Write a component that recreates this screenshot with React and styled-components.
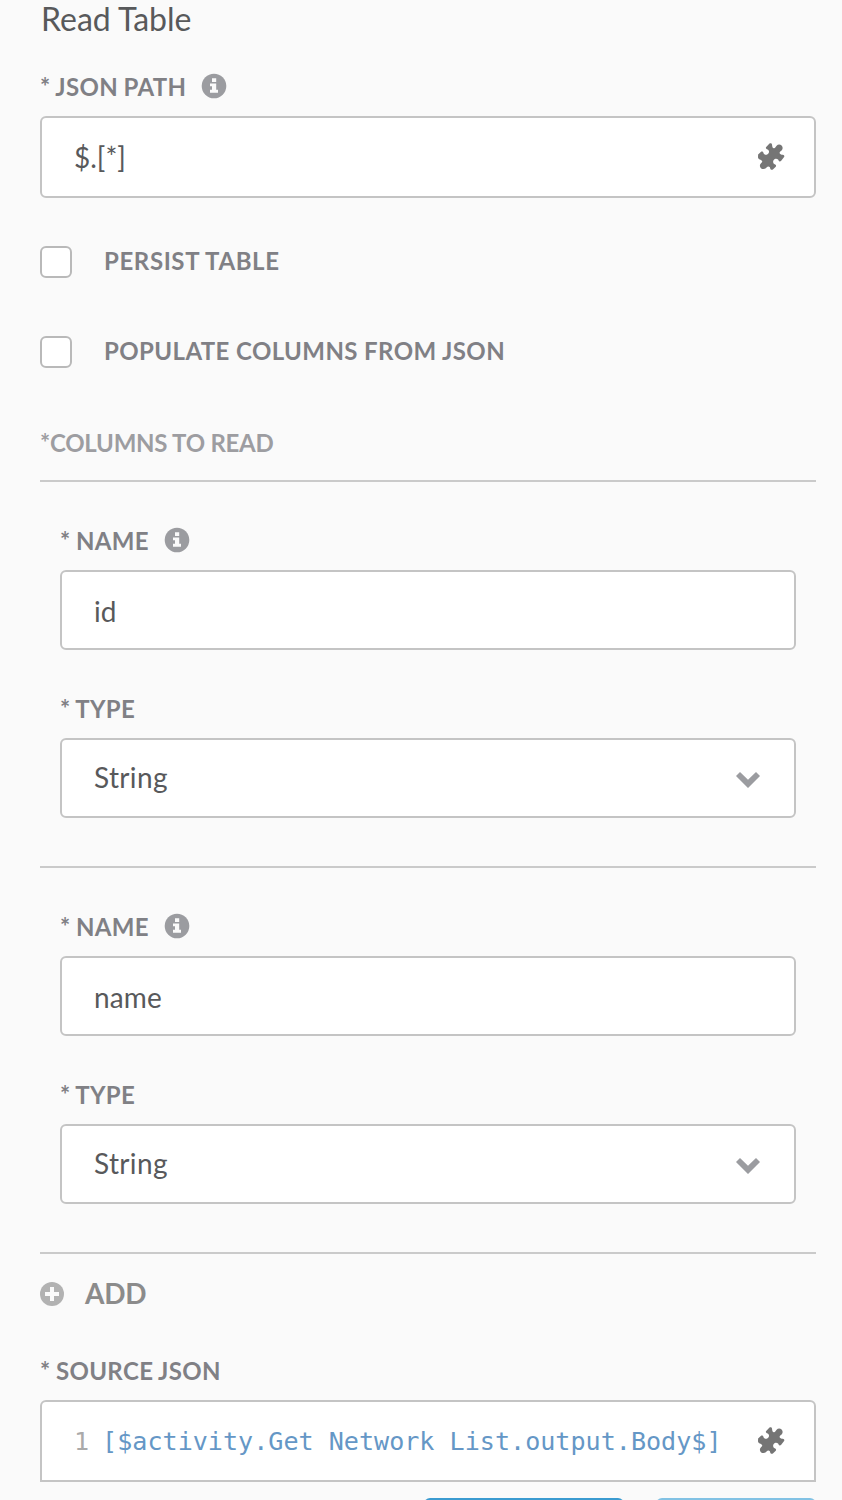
import React from 'react';
import styled, { createGlobalStyle } from 'styled-components';

const GlobalStyle = createGlobalStyle`
  * { box-sizing: border-box; }
  html, body { margin: 0; background: #fafafa; }
  body { font-family: Lato, sans-serif; color: #58595b; overflow: hidden; }
`;

const Panel = styled.main`
  height: 1500px;
  padding: 0 26px 0 40px;
  overflow: hidden;
  background: #fafafa;
`;

const Title = styled.h1`
  margin: 0;
  height: 58px;
  padding-left: 1px;
  font-size: 32px;
  line-height: 37px;
  font-weight: 400;
  white-space: nowrap;
`;

const Label = styled.label`
  display: flex;
  align-items: center;
  gap: 16px;
  height: 58px;
  font-size: 24px;
  font-weight: 700;
  line-height: 58px;
  letter-spacing: 0.35px;
  word-spacing: -0.8px;
  color: #808085;
  white-space: nowrap;

  svg { margin: -3px 0 0 -1px; }
`;

const Field = styled.div`
  display: flex;
  align-items: center;
  justify-content: space-between;
  height: ${(p) => p.$height || 80}px;
  padding: 0 ${(p) => p.$right || 28}px 0 32px;
  border: 2px solid #c4c4c4;
  border-radius: ${(p) => (p.$square ? '6px 6px 0 0' : '6px')};
  background: #fff;
  font-size: 28px;
  line-height: 34px;
  white-space: nowrap;
`;

const Value = styled.span`
  padding-top: ${(p) => p.$drop || 0}px;
  padding-bottom: ${(p) => p.$lift || 0}px;
  letter-spacing: ${(p) => p.$spacing || 0}px;
`;

const Checks = styled.div`
  display: flex;
  flex-direction: column;
  gap: 58px;
  padding-top: 48px;
`;

const CheckRow = styled.div`
  display: flex;
  align-items: center;
  gap: 32px;
  height: 32px;
  font-size: 24px;
  font-weight: 700;
  line-height: 30px;
  letter-spacing: ${(p) => p.$spacing};
  color: #808085;
  white-space: nowrap;
`;

const RaisedText = styled.span`
  padding-bottom: 2px;
`;

const CheckBox = styled.span`
  width: 32px;
  height: 32px;
  border: 2px solid #b9b9b9;
  border-radius: 6px;
  background: #fff;
`;

const SectionTitle = styled.h2`
  margin: 60px 0 0;
  height: 54px;
  border-bottom: 2px solid #cacaca;
  font-size: 24px;
  line-height: 30px;
  font-weight: 700;
  letter-spacing: -0.25px;
  color: #9d9da1;
`;

const Column = styled.section`
  height: 386px;
  padding: 30px 20px 0;
  border-bottom: 2px solid #cacaca;
`;

const AddButton = styled.button`
  display: flex;
  align-items: center;
  gap: 21px;
  height: 88px;
  padding: 0 0 8px;
  border: 0;
  background: none;
  font: 700 28px/80px Lato, sans-serif;
  letter-spacing: -0.3px;
  color: #8b8b8b;
`;

const Code = styled.code`
  display: flex;
  gap: 13px;
  padding-top: 1px;
  font: 25.1px/34px 'DejaVu Sans Mono', monospace;
  color: #6597c6;
`;

const LineNumber = styled.span`
  color: #aaa;
`;

const Actions = styled.footer`
  display: flex;
  justify-content: flex-end;
  gap: 32px;
  padding-top: 16px;
`;

const Action = styled.div`
  width: ${(p) => p.$width}px;
  height: 60px;
  border-radius: 6px;
  background: ${(p) => p.$color};
`;

const Spacer = styled.div`
  height: 30px;
`;

const Lowered = styled.span`
  display: flex;
  padding-top: 4px;
`;

const InfoIcon = () => (
  <svg width="26" height="26" viewBox="0 0 26 26">
    <circle cx="13" cy="13" r="12.3" fill="#9b9ca0" />
    <path fill="#fafafa" d="M11 5.200h4.200v3.800H11zM9 10.400h6.200v6.400H17v2.900H9v-2.900h2v-3.500H9z" />
  </svg>
);

const PuzzleIcon = () => (
  <svg width="28" height="28" viewBox="0 0 28 28">
    <path
      fill="#757575"
      d="M8.200 3.900 11.500.6C12.400-.2 13.800.2 14 1.500 14.200 3.800 14.600 5.200 15.900 5.200 17.300 5.300 17.700 3.700 18.600 2.700 19.900 1.200 22.200 1.200 23.600 2.500 25 3.900 25 6.200 23.600 7.600 22.800 8.400 21.600 8.800 21.600 9.900 21.700 11.300 23.300 11.500 24.800 11.800 26.300 12 26.800 13.200 25.900 14.200L23 17.900C22.200 18.700 21 18.500 20.600 17.500 20.200 15.900 18.400 15.200 16.900 16 15 16.900 14.600 19.200 15.800 20.700 16.300 21.200 17.100 21.200 17.600 21.700 18.300 22.400 18.200 23.300 17.500 24L14.900 26.400C13.900 27.200 12.500 26.800 12.200 25.500 12 24.300 11.500 23.600 10.400 23.600 9.100 23.600 8.700 24.600 7.800 25.300 6.300 26.500 4 26.300 2.700 24.900 1.500 23.500 1.700 21.700 2.800 20.500 3.500 19.700 4.300 19.300 4.200 18.300 4 17.100 2.800 16.900 1.700 16.400.6 16 .1 15.300 0 14.200L.1 11.600 2.800 8.900C3.800 8 5.100 8.500 5.400 9.700 5.900 11.500 7.500 12.200 9.100 11.600 11 10.900 11.600 8.700 10.500 7.200 10 6.500 9.200 6.500 8.500 6 7.700 5.400 7.600 4.600 8.200 3.900Z"
    />
  </svg>
);

const ChevronIcon = () => (
  <svg width="24" height="16" viewBox="0 0 24 16">
    <path fill="#9b9ca0" d="M4 0 12 7.800 20 0 24 4 12 16 0 4z" />
  </svg>
);

const PlusIcon = () => (
  <svg width="24" height="24" viewBox="0 0 24 24">
    <circle cx="12" cy="12" r="12" fill="#b2b2b2" />
    <path fill="#fafafa" d="M10 5h4v5h5v4h-5v5h-4v-5H5v-4h5z" />
  </svg>
);

const ColumnEditor = ({ name, type }) => (
  <Column>
    <Label>* NAME <InfoIcon /></Label>
    <Field><Value $drop={2} $spacing={0.15}>{name}</Value></Field>
    <Spacer />
    <Label>* TYPE</Label>
    <Field $right={34}>
      <Value $lift={2} $spacing={0.35}>{type}</Value>
      <Lowered><ChevronIcon /></Lowered>
    </Field>
  </Column>
);

export default function App() {
  return (
    <Panel>
      <GlobalStyle />
      <Title>Read Table</Title>
      <Label>* JSON PATH <InfoIcon /></Label>
      <Field $height={82}>
        <Value>$.[*]</Value>
        <PuzzleIcon />
      </Field>
      <Checks>
        <CheckRow $spacing="0.6px"><CheckBox /><RaisedText>PERSIST TABLE</RaisedText></CheckRow>
        <CheckRow $spacing="0.4px"><CheckBox /><RaisedText>POPULATE COLUMNS FROM JSON</RaisedText></CheckRow>
      </Checks>
      <SectionTitle>*COLUMNS TO READ</SectionTitle>
      <ColumnEditor name="id" type="String" />
      <ColumnEditor name="name" type="String" />
      <AddButton><PlusIcon /><RaisedText>ADD</RaisedText></AddButton>
      <Label>* SOURCE JSON</Label>
      <Field $height={82} $square>
        <Code>
          <LineNumber>1</LineNumber>
          <span>[$activity.Get Network List.output.Body$]</span>
        </Code>
        <PuzzleIcon />
      </Field>
      <Actions>
        <Action $width={200} $color="#3b9bd0" />
        <Action $width={160} $color="#82c2e4" />
      </Actions>
    </Panel>
  );
}
